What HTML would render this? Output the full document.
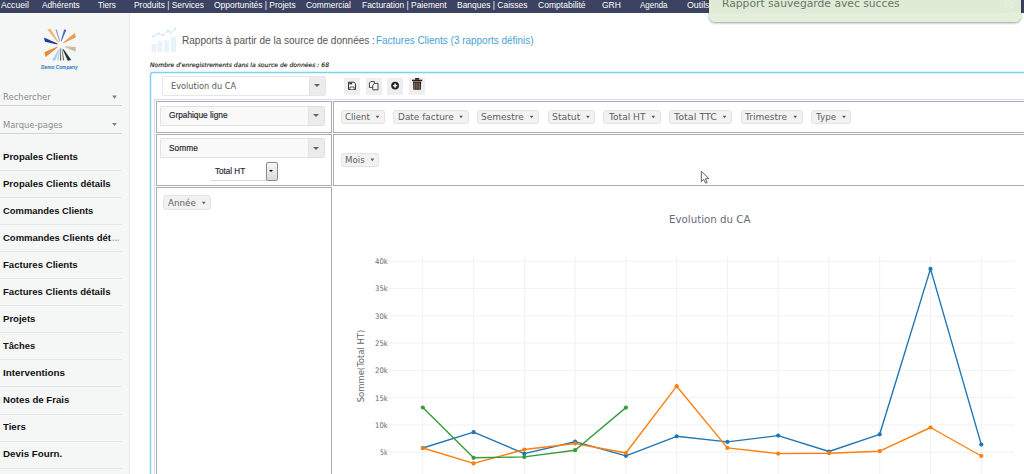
<!DOCTYPE html>
<html lang="fr">
<head>
<meta charset="utf-8">
<title>Rapports - Factures Clients</title>
<style>
*{box-sizing:border-box;margin:0;padding:0}
html,body{width:1024px;height:474px;overflow:hidden;background:#fff}
body{position:relative;font-family:"Liberation Sans",Arial,sans-serif}
.t{position:absolute;white-space:nowrap;transform-origin:0 0;line-height:normal;display:block}
.abs{position:absolute}
#nav{position:absolute;left:0;top:0;width:1024px;height:13px;background:#3c4262}
#side{position:absolute;left:0;top:13px;width:130px;height:461px;background:#f5f6f6;border-right:1px solid #e6e7e7}
.sep{position:absolute;left:0;width:122px;height:1px;background:#e4e5e5}
.usep{position:absolute;left:0;width:122px;height:1px;background:#d2d3d3}
.tri{position:absolute;width:0;height:0;border-left:2.5px solid transparent;border-right:2.5px solid transparent;border-top:3px solid #777}
#pvt{position:absolute;left:154px;top:99px;width:880px;height:400px;border:1px solid #d9d9fb}
.cell{position:absolute;border:1px solid #adadad;background:#fff}
.sel{position:absolute;border:1px solid #e0e0e0;border-radius:2px;background:#f9f9f9}
.sel b{position:absolute;right:0;top:0;bottom:0;width:16px;background:#ececec;border-left:1px solid #e2e2e2}
.sel i{position:absolute;right:5px;top:50%;margin-top:-1.5px;width:0;height:0;border-left:3.2px solid transparent;border-right:3.2px solid transparent;border-top:3.5px solid #6a5f6a}
.ib{position:absolute;top:78px;width:16px;height:16.5px;background:#eee}
.chip{position:absolute;background:#f2f2f2;border:1px solid #e3e3e3;border-radius:3px}
.ctri{position:absolute;width:0;height:0;border-left:1.8px solid transparent;border-right:1.8px solid transparent;border-top:2.6px solid #666}
#toast{position:absolute;left:709px;top:-6px;width:311.5px;height:28px;background:#dfebd5;border-radius:0 0 6px 6px;box-shadow:0 1px 2.5px rgba(0,0,0,.4)}
#toast .lo{position:absolute;left:0;right:0;top:19px;bottom:0;background:#e3efda;border-radius:0 0 6px 6px}
</style>
</head>
<body>

<div id="main">
<svg class="abs" style="left:150px;top:27px" width="28" height="26" viewBox="150 27 28 26">
<g fill="#e6f2f9"><rect x="151.5" y="44" width="4.8" height="8"/><rect x="157.6" y="41.3" width="4.6" height="10.7"/><rect x="164.4" y="40.4" width="4.6" height="11.6"/><rect x="170.8" y="37" width="5.2" height="15"/></g>
<g stroke="#fff" stroke-width=".7" opacity=".6"><path d="M153.9 44v8M159.9 41.3v10.7M166.7 40.4v11.6M173.4 37v15"/></g>
<polyline points="153.2,36.2 158.5,33.4 162.8,35.2 168.1,30.8 170.8,32.6 175.2,28.8" fill="none" stroke="#dcedf6" stroke-width="1.2"/>
<g fill="#d8ebf5"><circle cx="153.2" cy="36.2" r="1.2"/><circle cx="158.5" cy="33.4" r="1.2"/><circle cx="162.8" cy="35.2" r="1.2"/><circle cx="168.1" cy="30.8" r="1.2"/><circle cx="170.8" cy="32.6" r="1.2"/><circle cx="175.2" cy="28.8" r="1.2"/></g>
</svg>
<span class="t " style='left:181.80px;top:34.41px;font:10.6px "Liberation Sans", Arial, sans-serif;color:#555;transform:scaleX(0.9467);'>Rapports à partir de la source de données :</span>
<span class="t " style='left:375.80px;top:34.41px;font:10.6px "Liberation Sans", Arial, sans-serif;color:#4a9fd3;transform:scaleX(0.9386);'>Factures Clients (3 rapports définis)</span>
<span class="t " style='left:150.20px;top:61.03px;font:italic normal 6.0px "DejaVu Sans", Verdana, sans-serif;color:#1a1a1a;transform:scaleX(1.0123);-webkit-text-stroke:.15px #1a1a1a;'>Nombre d&#x27;enregistrements dans la source de données : 68</span>
<svg id="box" class="abs" style="left:148px;top:70px" width="876" height="404" viewBox="148 70 876 404"><rect x="150.5" y="72.5" width="900" height="420" rx="2.5" fill="#fff" stroke="#7ed2f0" stroke-width="1.5"/></svg>
<div class="sel" style="left:162px;top:76px;width:164px;height:19.5px;background:#fff;border-color:#e6e6e6"><b></b><i></i></div>
<span class="t " style='left:170.50px;top:80.82px;font:8.6px "DejaVu Sans", Verdana, sans-serif;color:#555;transform:scaleX(0.9513);'>Evolution du CA</span>
<div class="ib" style="left:343.5px"></div><div class="ib" style="left:366px"></div><div class="ib" style="left:387.3px"></div><div class="ib" style="left:409.2px"></div>
<svg class="abs" style="left:343px;top:77px" width="84" height="19" viewBox="343 77 84 19">
<g fill="none" stroke="#3a3030" stroke-width="1">
<path d="M348.5 82.2h5.4l1.6 1.5v5.8h-7z" fill="#f4f4f4"/>
<path d="M349.3 82.6h2.8v1.7h-2.8z" fill="#3a3030" stroke="none"/>
<path d="M350 89.4v-2.4h4v2.4" fill="#fff" stroke-width=".8"/>
<path d="M370.8 81.6h3.6v5.8h-5v-4.4z" fill="#f8f8f8" stroke-width=".9"/>
<path d="M374.4 83.4h3.6v6.4h-5.2v-4.8z" fill="#f8f8f8" stroke-width=".9"/>
</g>
<circle cx="395.1" cy="85.6" r="3.9" fill="#26202a"/><path d="M393 85.6h4.2M395.1 83.5v4.2" stroke="#fff" stroke-width="1.4"/>
<g fill="#2a2222"><rect x="412" y="79.7" width="10.2" height="1.4"/><rect x="415" y="78" width="4.2" height="1.8" rx=".6"/><path d="M413 81.6h8.2l-.4 8.1h-7.4z"/></g>
<path d="M414.8 82.6v6.2M417 82.6v6.2M419.2 82.6v6.2" stroke="#b08c66" stroke-width=".95"/>
</svg>
<div id="pvt"></div>
<div class="cell" style="left:156px;top:101px;width:176px;height:32px"></div>
<div class="cell" style="left:333px;top:101px;width:720px;height:32px"></div>
<div class="cell" style="left:156px;top:134px;width:176px;height:52px"></div>
<div class="cell" style="left:333px;top:134px;width:720px;height:52px"></div>
<div class="cell" style="left:156px;top:187px;width:176px;height:300px"></div>
<div class="sel" style="left:160px;top:105.5px;width:164.5px;height:20px"><b></b><i></i></div>
<div class="sel" style="left:160px;top:138px;width:164.5px;height:20px"><b></b><i></i></div>
<span class="t " style='left:168.60px;top:110.07px;font:9.2px "Liberation Sans", Arial, sans-serif;color:#2b2b33;transform:scaleX(0.9018);-webkit-text-stroke:.2px #2b2b33;'>Grpahique ligne</span>
<span class="t " style='left:168.50px;top:142.57px;font:9.2px "Liberation Sans", Arial, sans-serif;color:#2b2b33;transform:scaleX(0.9098);-webkit-text-stroke:.2px #2b2b33;'>Somme</span>
<span class="t " style='left:214.80px;top:165.97px;font:9.2px "Liberation Sans", Arial, sans-serif;color:#2b2b33;transform:scaleX(0.8817);-webkit-text-stroke:.2px #2b2b33;'>Total HT</span>
<div class="abs" style="left:210.7px;top:180px;width:56px;height:1px;background:#d6d6d6"></div>
<div class="abs" style="left:266.3px;top:162.4px;width:11.4px;height:18.4px;border:1px solid #8a8a8a;border-radius:2px;background:linear-gradient(#f6f6f6,#dadada)"><div style="position:absolute;left:2.2px;top:6.8px;width:0;height:0;border-left:2.5px solid transparent;border-right:2.5px solid transparent;border-top:2.8px solid #000"></div></div>
<div class="chip" style="left:340.9px;top:109.7px;width:44.5px;height:14.0px"></div>
<span class="t " style='left:344.90px;top:111.85px;font:9.0px "DejaVu Sans", Verdana, sans-serif;color:#606060;transform:scaleX(0.9500);'>Client</span>
<div class="chip" style="left:393.3px;top:109.7px;width:75.5px;height:14.0px"></div>
<span class="t " style='left:397.70px;top:111.85px;font:9.0px "DejaVu Sans", Verdana, sans-serif;color:#606060;transform:scaleX(0.9923);'>Date facture</span>
<div class="chip" style="left:477.3px;top:109.7px;width:62.2px;height:14.0px"></div>
<span class="t " style='left:481.10px;top:111.85px;font:9.0px "DejaVu Sans", Verdana, sans-serif;color:#606060;transform:scaleX(1.0006);'>Semestre</span>
<div class="chip" style="left:547.8px;top:109.7px;width:47.1px;height:14.0px"></div>
<span class="t " style='left:551.80px;top:111.85px;font:9.0px "DejaVu Sans", Verdana, sans-serif;color:#606060;transform:scaleX(1.0289);'>Statut</span>
<div class="chip" style="left:603.2px;top:109.7px;width:57.6px;height:14.0px"></div>
<span class="t " style='left:608.61px;top:111.85px;font:9.0px "DejaVu Sans", Verdana, sans-serif;color:#606060;transform:scaleX(1.0094);'>Total HT</span>
<div class="chip" style="left:668.8px;top:109.7px;width:63.1px;height:14.0px"></div>
<span class="t " style='left:674.36px;top:111.85px;font:9.0px "DejaVu Sans", Verdana, sans-serif;color:#606060;transform:scaleX(1.0634);'>Total TTC</span>
<div class="chip" style="left:740.5px;top:109.7px;width:62.1px;height:14.0px"></div>
<span class="t " style='left:745.40px;top:111.85px;font:9.0px "DejaVu Sans", Verdana, sans-serif;color:#606060;transform:scaleX(1.0046);'>Trimestre</span>
<div class="chip" style="left:810.8px;top:109.7px;width:40.6px;height:14.0px"></div>
<span class="t " style='left:816.28px;top:111.85px;font:9.0px "DejaVu Sans", Verdana, sans-serif;color:#606060;transform:scaleX(0.9758);'>Type</span>
<div class="chip" style="left:341.4px;top:152.7px;width:38.0px;height:13.9px"></div>
<span class="t " style='left:344.90px;top:154.75px;font:9.0px "DejaVu Sans", Verdana, sans-serif;color:#606060;transform:scaleX(0.9628);'>Mois</span>
<div class="chip" style="left:163.3px;top:194.9px;width:47.8px;height:14.8px"></div>
<span class="t " style='left:167.70px;top:197.85px;font:9.0px "DejaVu Sans", Verdana, sans-serif;color:#606060;transform:scaleX(0.9690);'>Année</span>
<svg class="abs" style="left:0;top:0" width="1024" height="474" viewBox="0 0 1024 474">
<g stroke="#f1f1f1" stroke-width="1" fill="none">
<path d="M422.8 256.2V474"/>
<path d="M473.6 256.2V474"/>
<path d="M524.3 256.2V474"/>
<path d="M575.1 256.2V474"/>
<path d="M625.9 256.2V474"/>
<path d="M676.7 256.2V474"/>
<path d="M727.4 256.2V474"/>
<path d="M778.2 256.2V474"/>
<path d="M829.0 256.2V474"/>
<path d="M879.7 256.2V474"/>
<path d="M930.5 256.2V474"/>
<path d="M981.3 256.2V474"/>
<path d="M388.5 261.3H1015"/>
<path d="M388.5 288.6H1015"/>
<path d="M388.5 315.9H1015"/>
<path d="M388.5 343.1H1015"/>
<path d="M388.5 370.4H1015"/>
<path d="M388.5 397.7H1015"/>
<path d="M388.5 425.0H1015"/>
<path d="M388.5 452.3H1015"/>
</g>
<polyline points="422.8,448.0 473.6,432.2 524.3,453.6 575.1,441.7 625.9,455.8 676.7,436.3 727.4,441.9 778.2,435.6 829.0,451.5 879.7,434.3 930.5,268.9 981.3,444.6" fill="none" stroke="#1f77b4" stroke-width="1.4" stroke-linejoin="round"/>
<g fill="#1f77b4"><circle cx="422.8" cy="448.0" r="2.1"/><circle cx="473.6" cy="432.2" r="2.1"/><circle cx="524.3" cy="453.6" r="2.1"/><circle cx="575.1" cy="441.7" r="2.1"/><circle cx="625.9" cy="455.8" r="2.1"/><circle cx="676.7" cy="436.3" r="2.1"/><circle cx="727.4" cy="441.9" r="2.1"/><circle cx="778.2" cy="435.6" r="2.1"/><circle cx="829.0" cy="451.5" r="2.1"/><circle cx="879.7" cy="434.3" r="2.1"/><circle cx="930.5" cy="268.9" r="2.1"/><circle cx="981.3" cy="444.6" r="2.1"/></g>
<polyline points="422.8,448.0 473.6,463.4 524.3,449.5 575.1,443.5 625.9,453.0 676.7,386.2 727.4,447.9 778.2,453.6 829.0,453.2 879.7,451.2 930.5,427.5 981.3,456.0" fill="none" stroke="#ff7f0e" stroke-width="1.4" stroke-linejoin="round"/>
<g fill="#ff7f0e"><circle cx="422.8" cy="448.0" r="2.1"/><circle cx="473.6" cy="463.4" r="2.1"/><circle cx="524.3" cy="449.5" r="2.1"/><circle cx="575.1" cy="443.5" r="2.1"/><circle cx="625.9" cy="453.0" r="2.1"/><circle cx="676.7" cy="386.2" r="2.1"/><circle cx="727.4" cy="447.9" r="2.1"/><circle cx="778.2" cy="453.6" r="2.1"/><circle cx="829.0" cy="453.2" r="2.1"/><circle cx="879.7" cy="451.2" r="2.1"/><circle cx="930.5" cy="427.5" r="2.1"/><circle cx="981.3" cy="456.0" r="2.1"/></g>
<polyline points="422.8,407.5 473.6,457.8 524.3,456.9 575.1,450.2 625.9,407.6" fill="none" stroke="#369c3a" stroke-width="1.4" stroke-linejoin="round"/>
<g fill="#369c3a"><circle cx="422.8" cy="407.5" r="2.1"/><circle cx="473.6" cy="457.8" r="2.1"/><circle cx="524.3" cy="456.9" r="2.1"/><circle cx="575.1" cy="450.2" r="2.1"/><circle cx="625.9" cy="407.6" r="2.1"/></g>
<text transform="translate(363.6 402.3) rotate(-90)" font-family='"DejaVu Sans", Verdana, sans-serif' font-size="8.6" fill="#666" textLength="72.6" lengthAdjust="spacingAndGlyphs">Somme(Total HT)</text>
<g fill="#5e5e5e"><path d="M375.6 115.7h3.8l-1.9 2.6z"/><path d="M459.1 115.7h3.8l-1.9 2.6z"/><path d="M529.7 115.7h3.8l-1.9 2.6z"/><path d="M586.0 115.7h3.8l-1.9 2.6z"/><path d="M651.4 115.7h3.8l-1.9 2.6z"/><path d="M722.6 115.7h3.8l-1.9 2.6z"/><path d="M793.3 115.7h3.8l-1.9 2.6z"/><path d="M842.1 115.7h3.8l-1.9 2.6z"/><path d="M370.5 158.6h3.8l-1.9 2.6z"/><path d="M201.9 201.7h3.8l-1.9 2.6z"/></g>
<path d="M701.3 171.2V181.6L703.7 179.4L705.6 183.2L707.2 182.4L705.4 178.8L708.8 178.5Z" fill="#fff" stroke="#333" stroke-width=".8" stroke-linejoin="round"/>
</svg>
<span class="t " style='left:668.86px;top:213.18px;font:10.9px "DejaVu Sans", Verdana, sans-serif;color:#666c7a;transform:scaleX(0.9405);'>Evolution du CA</span>
<span class="t " style='left:374.90px;top:257.15px;font:7.6px "DejaVu Sans", Verdana, sans-serif;color:#666;transform:scaleX(0.9071);'>40k</span>
<span class="t " style='left:374.90px;top:284.45px;font:7.6px "DejaVu Sans", Verdana, sans-serif;color:#666;transform:scaleX(0.9071);'>35k</span>
<span class="t " style='left:374.90px;top:311.75px;font:7.6px "DejaVu Sans", Verdana, sans-serif;color:#666;transform:scaleX(0.9071);'>30k</span>
<span class="t " style='left:374.90px;top:338.95px;font:7.6px "DejaVu Sans", Verdana, sans-serif;color:#666;transform:scaleX(0.9071);'>25k</span>
<span class="t " style='left:374.90px;top:366.25px;font:7.6px "DejaVu Sans", Verdana, sans-serif;color:#666;transform:scaleX(0.9071);'>20k</span>
<span class="t " style='left:374.90px;top:393.55px;font:7.6px "DejaVu Sans", Verdana, sans-serif;color:#666;transform:scaleX(0.9071);'>15k</span>
<span class="t " style='left:374.90px;top:420.85px;font:7.6px "DejaVu Sans", Verdana, sans-serif;color:#666;transform:scaleX(0.9071);'>10k</span>
<span class="t " style='left:380.30px;top:448.15px;font:7.6px "DejaVu Sans", Verdana, sans-serif;color:#666;transform:scaleX(0.8035);'>5k</span>
</div>
<div id="side"></div>
<svg class="abs" style="left:40px;top:26px" width="40" height="38" viewBox="40 26 40 38">
<polygon points="47.4,29.4 50.6,28.7 58.9,42.4 58.1,42.9" fill="#f6b56f"/>
<polygon points="55.4,29.7 56.8,29.4 60.2,41.6 59.5,41.8" fill="#7da3cf"/>
<polygon points="64.2,29.3 66.3,29.9 61.5,41.2 60.8,41" fill="#3f6cb8"/>
<polygon points="74.7,33 76,37.2 63.6,43.3 63.2,42.4" fill="#f19a4c"/>
<polygon points="44,37.4 44.9,41.8 57.3,44.5 57.4,43.6" fill="#1b3e93"/>
<polygon points="75.8,47 75.6,51.8 64.6,47 64.8,46.2" fill="#cbbba2"/>
<polygon points="44.4,52.2 45.6,56.9 57.6,47.6 57,46.8" fill="#f0892b"/>
<polygon points="52,60.3 55.4,60.6 59.2,49.8 58.3,49.5" fill="#a4d3f2"/>
<polygon points="57.2,60.5 58.6,60.5 60,48.5 59.4,48.4" fill="#c4c8ce"/>
<polygon points="60,60.6 61.2,60.6 60.9,48.2 60.4,48.2" fill="#4c6a4c"/>
<polygon points="63,60.6 64.3,60.4 62.2,48.4 61.6,48.5" fill="#7a6a86"/>
<polygon points="67.8,60.8 71.3,60.1 63.6,49.2 62.8,49.8" fill="#27352b"/>
</svg>
<span class="t " style='left:41.40px;top:64.03px;font:italic bold 5.6px "Liberation Sans", Arial, sans-serif;color:#2a7abd;transform:scaleX(0.8604);'>Demo Company</span>
<span class="t " style='left:2.80px;top:91.83px;font:8.8px "DejaVu Sans", Verdana, sans-serif;color:#8c8c8c;transform:scaleX(0.9582);'>Rechercher</span>
<span class="t " style='left:2.80px;top:119.83px;font:8.8px "DejaVu Sans", Verdana, sans-serif;color:#8c8c8c;transform:scaleX(0.9516);'>Marque-pages</span>
<svg class="abs" style="left:110px;top:92px" width="10" height="36" viewBox="110 92 10 36"><path d="M112.2 95.6h4.6l-2.3 3.1zM112.2 123h4.6l-2.3 3.1z" fill="#7a7a7a"/></svg>
<div class="usep" style="top:105px"></div><div class="usep" style="top:132.7px"></div>
<span class="t " style='left:2.50px;top:151.85px;font:normal bold 9.0px "Liberation Sans", Arial, sans-serif;color:#111;transform:scaleX(1.0621);'>Propales Clients</span>
<div class="sep" style="top:170.0px"></div>
<span class="t " style='left:2.50px;top:178.91px;font:normal bold 9.0px "Liberation Sans", Arial, sans-serif;color:#111;transform:scaleX(1.0598);'>Propales Clients détails</span>
<div class="sep" style="top:197.1px"></div>
<span class="t " style='left:2.50px;top:205.95px;font:normal bold 9.0px "Liberation Sans", Arial, sans-serif;color:#111;transform:scaleX(1.0438);'>Commandes Clients</span>
<div class="sep" style="top:224.1px"></div>
<span class="t " style='left:2.50px;top:233.00px;font:normal bold 9.0px "Liberation Sans", Arial, sans-serif;color:#111;transform:scaleX(1.0534);'>Commandes Clients dét</span>
<div class="sep" style="top:251.2px"></div>
<span class="t " style='left:2.50px;top:260.06px;font:normal bold 9.0px "Liberation Sans", Arial, sans-serif;color:#111;transform:scaleX(1.0669);'>Factures Clients</span>
<div class="sep" style="top:278.2px"></div>
<span class="t " style='left:2.50px;top:287.11px;font:normal bold 9.0px "Liberation Sans", Arial, sans-serif;color:#111;transform:scaleX(1.0650);'>Factures Clients détails</span>
<div class="sep" style="top:305.2px"></div>
<span class="t " style='left:2.50px;top:314.16px;font:normal bold 9.0px "Liberation Sans", Arial, sans-serif;color:#111;transform:scaleX(1.0621);'>Projets</span>
<div class="sep" style="top:332.3px"></div>
<span class="t " style='left:2.50px;top:341.21px;font:normal bold 9.0px "Liberation Sans", Arial, sans-serif;color:#111;transform:scaleX(1.0351);'>Tâches</span>
<div class="sep" style="top:359.4px"></div>
<span class="t " style='left:2.50px;top:368.25px;font:normal bold 9.0px "Liberation Sans", Arial, sans-serif;color:#111;transform:scaleX(1.0973);'>Interventions</span>
<div class="sep" style="top:386.4px"></div>
<span class="t " style='left:2.50px;top:395.31px;font:normal bold 9.0px "Liberation Sans", Arial, sans-serif;color:#111;transform:scaleX(1.0691);'>Notes de Frais</span>
<div class="sep" style="top:413.5px"></div>
<span class="t " style='left:2.50px;top:422.36px;font:normal bold 9.0px "Liberation Sans", Arial, sans-serif;color:#111;transform:scaleX(1.0683);'>Tiers</span>
<div class="sep" style="top:440.5px"></div>
<span class="t " style='left:2.50px;top:449.41px;font:normal bold 9.0px "Liberation Sans", Arial, sans-serif;color:#111;transform:scaleX(1.0869);'>Devis Fourn.</span>
<div class="sep" style="top:467.6px"></div>
<span class="t " style='left:111.50px;top:233.00px;font:normal bold 9.0px "Liberation Sans", Arial, sans-serif;color:#aaa;transform:scaleX(0.9856);'>...</span>
<div id="nav"></div>
<span class="t " style='left:1.40px;top:-1.31px;font:9.4px "Liberation Sans", Arial, sans-serif;color:#fff;transform:scaleX(0.9224);'>Accueil</span>
<span class="t " style='left:42.20px;top:-1.31px;font:9.4px "Liberation Sans", Arial, sans-serif;color:#fff;transform:scaleX(0.8827);'>Adhérents</span>
<span class="t " style='left:97.50px;top:-1.31px;font:9.4px "Liberation Sans", Arial, sans-serif;color:#fff;transform:scaleX(0.8703);'>Tiers</span>
<span class="t " style='left:133.60px;top:-1.31px;font:9.4px "Liberation Sans", Arial, sans-serif;color:#fff;transform:scaleX(0.8966);'>Produits | Services</span>
<span class="t " style='left:214.30px;top:-1.31px;font:9.4px "Liberation Sans", Arial, sans-serif;color:#fff;transform:scaleX(0.9019);'>Opportunités | Projets</span>
<span class="t " style='left:306.20px;top:-1.31px;font:9.4px "Liberation Sans", Arial, sans-serif;color:#fff;transform:scaleX(0.8974);'>Commercial</span>
<span class="t " style='left:361.60px;top:-1.31px;font:9.4px "Liberation Sans", Arial, sans-serif;color:#fff;transform:scaleX(0.8991);'>Facturation | Paiement</span>
<span class="t " style='left:456.70px;top:-1.31px;font:9.4px "Liberation Sans", Arial, sans-serif;color:#fff;transform:scaleX(0.9028);'>Banques | Caisses</span>
<span class="t " style='left:537.50px;top:-1.31px;font:9.4px "Liberation Sans", Arial, sans-serif;color:#fff;transform:scaleX(0.9134);'>Comptabilité</span>
<span class="t " style='left:602.40px;top:-1.31px;font:9.4px "Liberation Sans", Arial, sans-serif;color:#fff;transform:scaleX(0.9072);'>GRH</span>
<span class="t " style='left:640.20px;top:-1.31px;font:9.4px "Liberation Sans", Arial, sans-serif;color:#fff;transform:scaleX(0.8517);'>Agenda</span>
<span class="t " style='left:686.70px;top:-1.31px;font:9.4px "Liberation Sans", Arial, sans-serif;color:#fff;transform:scaleX(0.9392);'>Outils</span>
<div id="toast"><div class="lo"></div></div>
<span class="t " style='left:721.52px;top:-3.21px;font:11.0px "DejaVu Sans", Verdana, sans-serif;color:#66786a;transform:scaleX(0.9756);'>Rapport sauvegarde avec succes</span>
<svg class="abs" style="left:1003px;top:-1px" width="11" height="11" viewBox="0 0 11 11"><circle cx="5.5" cy="5.5" r="4" fill="none" stroke="#e9f2e2" stroke-width="1"/><path d="M3.6 3.6l3.8 3.8M7.4 3.6L3.6 7.4" stroke="#e9f2e2" stroke-width=".9"/></svg>
</body>
</html>
